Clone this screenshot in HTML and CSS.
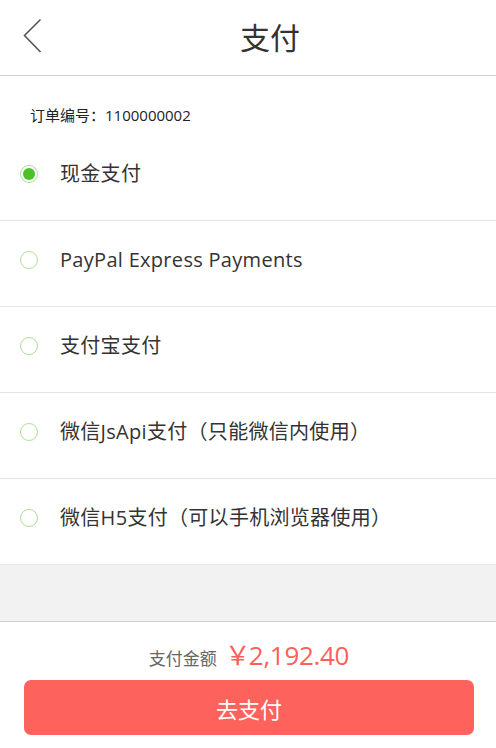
FILE: index.html
```html
<!DOCTYPE html>
<html lang="zh-CN">
<head>
<meta charset="utf-8">
<title>支付</title>
<link rel="stylesheet" href="styles.css">
</head>
<body>
<div class="page">
  <header class="header">
    <a class="back" href="#" aria-label="返回">
      <svg width="20" height="36" viewBox="0 0 20 36"><path d="M17.5 1.5 L1.5 17.5 L17.5 34" fill="none" stroke="#555" stroke-width="1.6"/></svg>
    </a>
    <h1 class="title">支付</h1>
  </header>
  <main class="content">
    <div class="order">订单编号：1100000002</div>
    <ul class="methods">
      <li class="method"><span class="radio checked"></span><span class="label">现金支付</span></li>
      <li class="method"><span class="radio"></span><span class="label">PayPal Express Payments</span></li>
      <li class="method"><span class="radio"></span><span class="label">支付宝支付</span></li>
      <li class="method"><span class="radio"></span><span class="label">微信JsApi支付（只能微信内使用）</span></li>
      <li class="method"><span class="radio"></span><span class="label">微信H5支付（可以手机浏览器使用）</span></li>
    </ul>
  </main>
  <footer class="footer">
    <div class="amount"><span class="amount-label">支付金额</span><span class="amount-value"><span class="yen">￥</span>2,192.40</span></div>
    <button class="pay" type="button">去支付</button>
  </footer>
</div>
</body>
</html>
```

FILE: styles.css
```css
* { box-sizing: border-box; }
html, body { margin: 0; padding: 0; }
body {
  background: #f2f2f2;
  font-family: "Open Sans", "Noto Sans CJK SC", sans-serif;
  color: #333;
}
.page {
  min-height: 748px;
  display: flex;
  flex-direction: column;
}
.header {
  position: relative;
  height: 76px;
  background: #fff;
  border-bottom: 1px solid #d0d0d0;
  display: flex;
  align-items: center;
  justify-content: center;
  padding-left: 44px;
}
.back {
  position: absolute;
  left: 23px;
  top: 18px;
  display: block;
  width: 20px;
  height: 36px;
}
.back svg { display: block; }
.title {
  margin: 0;
  font-size: 30px;
  font-weight: 400;
  color: #333;
  line-height: 1;
  padding-top: 1px;
}
.content { background: #fff; }
.order {
  padding: 28px 0 9px 30px;
  font-size: 15px;
  line-height: 22px;
  color: #222;
}
.methods { list-style: none; margin: 0; padding: 0; }
.method {
  height: 86px;
  padding: 0 0 8px 20px;
  border-bottom: 1px solid #e5e5e5;
  display: flex;
  align-items: center;
}
.radio {
  width: 18px;
  height: 18px;
  border-radius: 50%;
  border: 1.5px solid #abdf99;
  flex: none;
  display: flex;
  align-items: center;
  justify-content: center;
}
.radio.checked::after {
  content: "";
  width: 12px;
  height: 12px;
  border-radius: 50%;
  background: #4cc12a;
}
.label {
  margin-left: 22px;
  font-size: 20px;
  line-height: 26px;
  letter-spacing: 0.3px;
  color: #333;
}
.footer {
  margin-top: auto;
  background: #fff;
  border-top: 1px solid #d0d0d0;
  padding: 9px 22px 13px 24px;
  display: flex;
  flex-direction: column;
  align-items: stretch;
}
.amount {
  display: flex;
  justify-content: center;
  align-items: baseline;
  height: 49px;
  padding-top: 4px;
}
.amount-label {
  font-size: 17px;
  color: #666;
  margin-right: 8px;
}
.amount-value {
  font-size: 26px;
  color: #fd5f5a;
  letter-spacing: -0.3px;
}
.yen {
  letter-spacing: -2px;
}
.pay {
  height: 55px;
  border: none;
  border-radius: 7px;
  background: #fe625d;
  color: #fff;
  font-family: "Open Sans", "Noto Sans CJK SC", sans-serif;
  font-size: 22px;
  cursor: pointer;
}
```
